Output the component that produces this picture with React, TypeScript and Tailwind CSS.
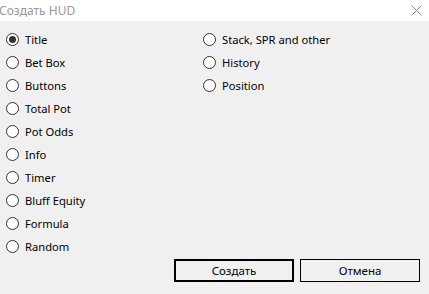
import React, { useState } from "react";

const leftItems = [
  "Title",
  "Bet Box",
  "Buttons",
  "Total Pot",
  "Pot Odds",
  "Info",
  "Timer",
  "Bluff Equity",
  "Formula",
  "Random",
];
const rightItems = ["Stack, SPR and other", "History", "Position"];

const Radio = ({ label, checked, onClick }: { label: string; checked: boolean; onClick: () => void }) => (
  <div className="flex h-[23px] items-center cursor-default" onClick={onClick}>
    <svg width="13" height="13" viewBox="0 0 13 13" className="shrink-0">
      <circle cx="6.5" cy="6.5" r="6" fill="#ffffff" stroke="#333333" strokeWidth="1" />
      {checked && <circle cx="6.5" cy="6.5" r="3.5" fill="#333333" />}
    </svg>
    <span className="ml-[6px] text-[11.2px] text-black leading-none">{label}</span>
  </div>
);

export default function App() {
  const [selected, setSelected] = useState("Title");

  return (
    <div className="w-[429px] h-[294px] bg-[#f0f0f0] overflow-hidden font-['Noto_Sans',sans-serif]">
      <div className="h-[21px] bg-white flex items-center justify-between">
        <span className="-ml-[1px] text-[12px] text-[#9a9a9a]">Создать HUD</span>
        <svg width="11" height="11" viewBox="0 0 11 11" className="mr-[7px]">
          <path d="M0.5 0.5 L10.5 10.5 M10.5 0.5 L0.5 10.5" stroke="#8a8a8a" strokeWidth="1" />
        </svg>
      </div>
      <div className="pt-[7px] pl-[6px] flex">
        <div className="w-[197px]">
          {leftItems.map((it) => (
            <Radio key={it} label={it} checked={selected === it} onClick={() => setSelected(it)} />
          ))}
        </div>
        <div>
          {rightItems.map((it) => (
            <Radio key={it} label={it} checked={selected === it} onClick={() => setSelected(it)} />
          ))}
        </div>
      </div>
      <div className="mt-[1px] flex justify-end gap-[6px] pr-[9px]">
        <button className="w-[120px] h-[23px] border-2 border-black bg-[#f0f0f0] text-[11.5px] text-black">
          Создать
        </button>
        <button className="w-[120px] h-[23px] border border-black bg-[#f0f0f0] text-[11.5px] text-black">
          Отмена
        </button>
      </div>
    </div>
  );
}
